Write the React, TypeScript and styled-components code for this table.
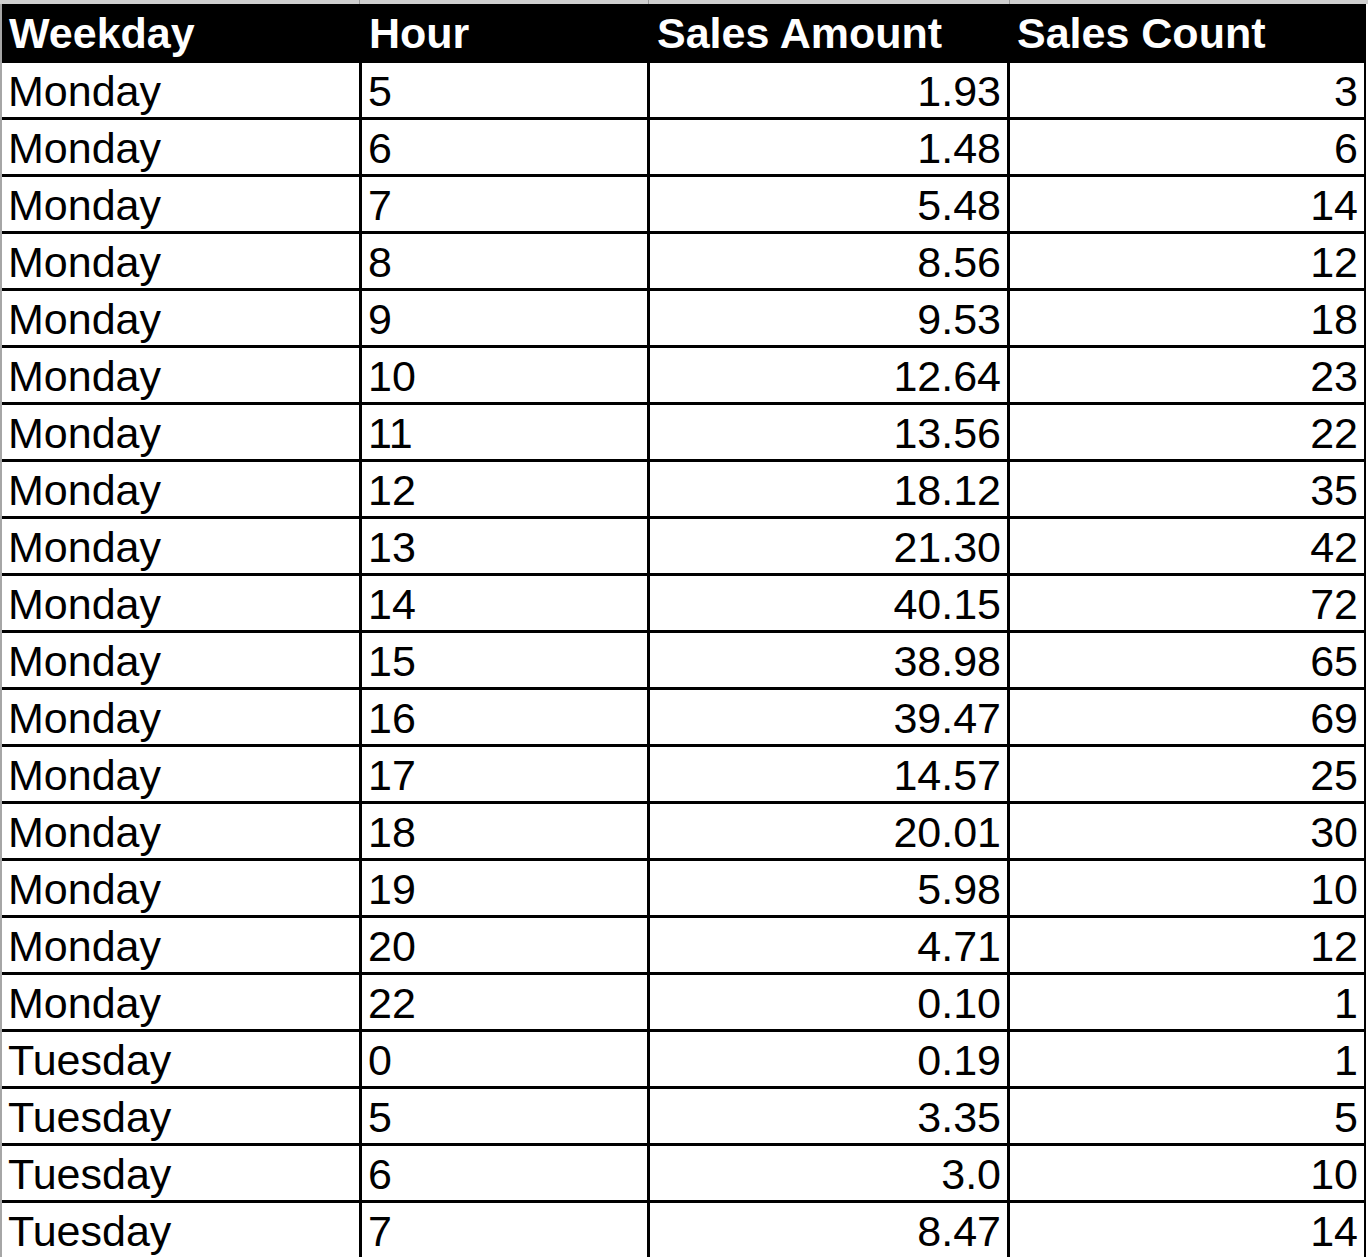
import React from "react";
import styled, { createGlobalStyle } from "styled-components";

const GlobalStyle = createGlobalStyle`
  html, body {
    margin: 0;
    padding: 0;
    background: #ffffff;
    overflow: hidden;
  }
  body {
    font-family: "Liberation Sans", Arial, sans-serif;
  }
`;

const Page = styled.div`
  width: 1368px;
  display: flex;
  flex-direction: column;
`;

const TopStrip = styled.div`
  display: grid;
  grid-template-columns: 359px 288px 360px 359px;
  column-gap: 1px;
  height: 4px;
  background: #9a9a9a;
  width: 1366px;
`;

const StripCell = styled.div`
  background: #cfcfcf;
`;

const Frame = styled.div`
  display: flex;
  flex-direction: row;
`;

const Edge = styled.div`
  width: 2px;
  background: #a6a6a6;
  flex: none;
`;

const Sheet = styled.div`
  display: grid;
  grid-template-columns: 357px 285px 357px 354px;
  column-gap: 3px;
  row-gap: 3px;
  background: #000000;
  padding-right: 2px;
  padding-bottom: 3px;
`;

const HeaderCell = styled.div`
  height: 56px;
  box-sizing: border-box;
  padding: 5px 6px 0 7px;
  background: #000000;
  color: #ffffff;
  font-weight: 700;
  font-size: 43px;
  line-height: 48px;
  white-space: nowrap;
  overflow: hidden;
`;

const Cell = styled.div<{ $align?: "left" | "right" }>`
  height: 54px;
  box-sizing: border-box;
  padding: 4px 6px 0 6px;
  background: #ffffff;
  color: #000000;
  font-size: 43px;
  line-height: 48px;
  text-align: ${(p) => p.$align ?? "left"};
  white-space: nowrap;
  overflow: hidden;
`;

type Row = [string, string, string, string];

const rows: Row[] = [
  ["Monday", "5", "1.93", "3"],
  ["Monday", "6", "1.48", "6"],
  ["Monday", "7", "5.48", "14"],
  ["Monday", "8", "8.56", "12"],
  ["Monday", "9", "9.53", "18"],
  ["Monday", "10", "12.64", "23"],
  ["Monday", "11", "13.56", "22"],
  ["Monday", "12", "18.12", "35"],
  ["Monday", "13", "21.30", "42"],
  ["Monday", "14", "40.15", "72"],
  ["Monday", "15", "38.98", "65"],
  ["Monday", "16", "39.47", "69"],
  ["Monday", "17", "14.57", "25"],
  ["Monday", "18", "20.01", "30"],
  ["Monday", "19", "5.98", "10"],
  ["Monday", "20", "4.71", "12"],
  ["Monday", "22", "0.10", "1"],
  ["Tuesday", "0", "0.19", "1"],
  ["Tuesday", "5", "3.35", "5"],
  ["Tuesday", "6", "3.0", "10"],
  ["Tuesday", "7", "8.47", "14"],
];

const headers = ["Weekday", "Hour", "Sales Amount", "Sales Count"];

export default function App() {
  return (
    <Page>
      <GlobalStyle />
      <TopStrip>
        <StripCell />
        <StripCell />
        <StripCell />
        <StripCell />
      </TopStrip>
      <Frame>
        <Edge />
        <Sheet>
          {headers.map((h) => (
            <HeaderCell key={h}>{h}</HeaderCell>
          ))}
          {rows.map((r, i) => (
            <React.Fragment key={i}>
              <Cell>{r[0]}</Cell>
              <Cell>{r[1]}</Cell>
              <Cell $align="right">{r[2]}</Cell>
              <Cell $align="right">{r[3]}</Cell>
            </React.Fragment>
          ))}
        </Sheet>
      </Frame>
    </Page>
  );
}
